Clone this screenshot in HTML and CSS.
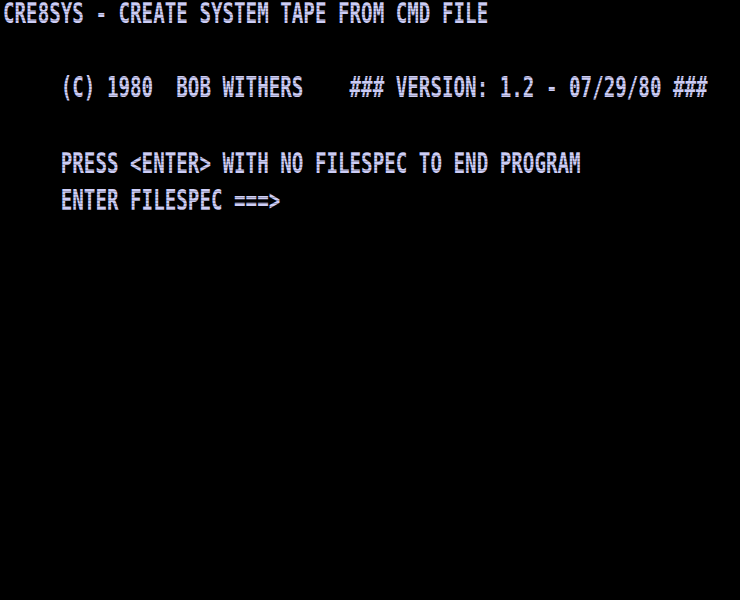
FILE: index.html
```html
<!DOCTYPE html>
<html>
<head>
<meta charset="utf-8">
<link rel="stylesheet" href="styles.css">
</head>
<body>
<div class="crt">
<pre class="screen">CRE8SYS - CREATE SYSTEM TAPE FROM CMD FILE

     (C) 1980  BOB WITHERS    ### VERSION: 1.2 - 07/29/80 ###

     PRESS &lt;ENTER&gt; WITH NO FILESPEC TO END PROGRAM
     ENTER FILESPEC ===&gt;</pre>
</div>
</body>
</html>
```

FILE: styles.css
```css
html, body {
  margin: 0;
  padding: 0;
  background: #000;
  width: 740px;
  height: 600px;
  overflow: hidden;
}
.crt {
  position: relative;
  width: 740px;
  height: 600px;
  overflow: hidden;
}
.crt::after {
  content: "";
  position: absolute;
  inset: 0;
  background: repeating-linear-gradient(to bottom, rgba(0,0,0,0) 0px, rgba(0,0,0,0) 2px, rgba(0,0,0,0.25) 2px, rgba(0,0,0,0.25) 3px);
  pointer-events: none;
}
.screen {
  margin: -5px 0 0 0;
  padding: 0 0 0 3px;
  font-family: "DejaVu Sans Mono", monospace;
  font-weight: bold;
  font-size: 19.2px;
  line-height: 25.685px;
  color: #cdcdf6;
  white-space: pre;
  transform: scaleY(1.46);
  transform-origin: 0 0;
  width: 730px;
}
```
